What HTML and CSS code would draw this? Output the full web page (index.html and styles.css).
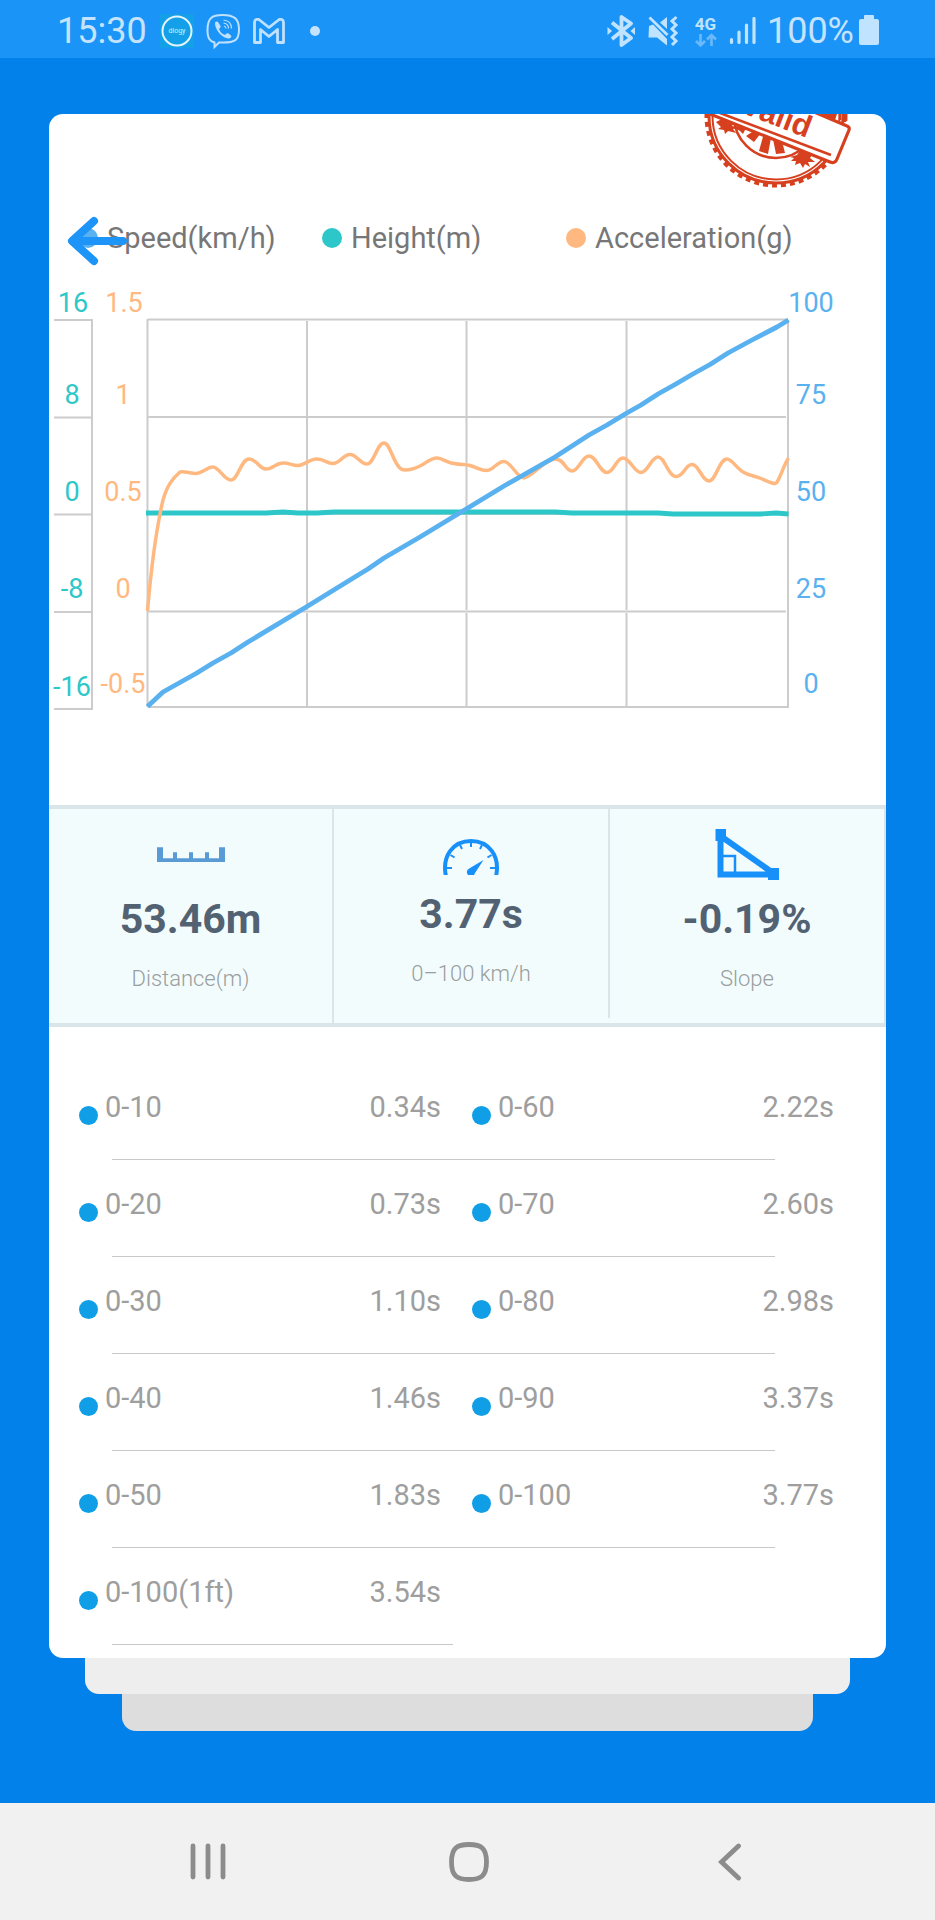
FILE: index.html
```html
<!DOCTYPE html>
<html lang="en">
<head>
<meta charset="utf-8">
<meta name="viewport" content="width=device-width, initial-scale=1">
<title>Acceleration report</title>
<link rel="stylesheet" href="styles.css">
</head>
<body>
<header class="status">
  <span class="status-text status-time">15:30</span>
  <svg class="status-app" width="34" height="34" viewBox="160 13 34 34" aria-hidden="true">
    <rect x="160" y="13" width="34" height="34" fill="#14a0e8"/>
    <circle cx="177" cy="30" r="14.500" fill="none" stroke="#e4f4fd" stroke-width="2"/>
    <text x="177" y="32" font-size="7" text-anchor="middle" fill="#d5effc">diogy</text>
  </svg>
  <svg class="status-viber" width="34" height="36" viewBox="206 12 34 36" fill="none" stroke="#c0e1fd" stroke-width="2" aria-hidden="true">
    <path d="M222.500 14C212 14 207.500 17 207.500 29c0 8 2 11 7 12.500v4.500l4.500-4.500h4c11.500 0 16-2 16-13S234 14 222.500 14z"/>
    <path d="M215 21.500c1-1 2-1.500 3-.5l2.500 4c.5 1-.5 2-1.500 3 1 3 3 5 6 6 1-1 2-2 3.500-1.500l2.500 2c1 1-.5 3-2.500 3-6 0-14-9-13.500-16z" fill="#c0e1fd" stroke="none"/>
    <path d="M223.500 19c5 .5 8 3.500 8 8.500M223.500 22c3 .5 5 2.500 5 5.500M224 25c1.200.2 1.800 1 2 2.500" stroke-width="1.200"/>
  </svg>
  <svg class="status-mail" width="34" height="26" viewBox="252 16.500 34 26" fill="none" stroke="#c0e1fd" stroke-width="2.800" stroke-linejoin="round" aria-hidden="true">
    <path d="M254.500 41v-20c0-3 3-4 5-2.500l9.500 7.500 9.500-7.500c2-1.500 5-.5 5 2.500v20h-6v-13l-8.500 7-8.500-7v13z"/>
  </svg>
  <span class="status-more"></span>
  <svg class="status-bt" width="28" height="32" viewBox="605 14 28 32" aria-hidden="true">
    <path d="M610 21.500l19 15.500-9.500 7v-28l9.500 6.500-19 15.500" fill="none" stroke="#c0e3ff" stroke-width="3.800" stroke-linejoin="round"/>
    <path d="M605.500 26l4.500 4-4.500 4zM633 26l-4.500 4 4.500 4z" fill="#c0e3ff"/>
  </svg>
  <svg class="status-mute" width="32" height="32" viewBox="646 13 32 32" aria-hidden="true">
    <path d="M647 24l4-1.500 14 14.500v6.500l-10-8h-8.500zM658 20.500l7-5.500v12z" fill="#c0e3ff"/>
    <path d="M647.500 15.500l18 17.500" stroke="#c0e3ff" stroke-width="2.800"/>
    <path d="M674.500 15l-4.500 4 4 4-4 4 4 4-4 4 4 4-4 4" fill="none" stroke="#c0e3ff" stroke-width="3"/>
  </svg>
  <svg class="status-net" width="24" height="34" viewBox="692 13 24 34" aria-hidden="true">
    <text x="703.500" y="29" font-size="17" font-weight="700" text-anchor="middle" fill="#c0e3ff">4G</text>
    <path d="M698.500 33v11M694 40l4.500 4.500 4.500-4.500M709.500 45v-11M705 38.500l4.500-4.500 4.500 4.500" fill="none" stroke="#6bb9fb" stroke-width="2.600"/>
  </svg>
  <svg class="status-signal" width="27" height="28" viewBox="727 17 27 28" fill="none" stroke="#c0e3ff" stroke-width="3.200" stroke-linecap="round" aria-hidden="true">
    <path d="M729.500 39.500v3M737 32v10.500M744.500 25v17.500M752 18.500v24"/>
  </svg>
  <span class="status-text status-percent">100%</span>
  <svg class="status-battery" width="20" height="31" viewBox="0 0 20 31" aria-hidden="true">
    <path d="M6 0h8q1 0 1 1v3h3q2 0 2 2v22q0 2-2 2H2q-2 0-2-2V6q0-2 2-2h3V1q0-1 1-1z" fill="#c0e3ff"/>
  </svg>
</header>

<main class="page">
  <article class="card">
    <svg class="stamp" width="152" height="76" viewBox="700 114 152 76" role="img" aria-label="Valid stamp" fill="none" stroke="#d7401f">
      <circle cx="776" cy="116" r="69.500" stroke-width="4" stroke-dasharray="5 4"/>
      <circle cx="776" cy="116" r="67" stroke-width="3"/>
      <circle cx="776" cy="116" r="63.500" stroke-width="2"/>
      <circle cx="776" cy="116" r="42" stroke-width="2.600"/>
      <g fill="#d7401f" stroke="none">
        <path d="M755 130l6 3-7 9-8-6zM764 133l7 5-3 16-9-3zM773 139l9 2 3 12-9 1z"/>
        <path d="M716 122l8-4 3 4 7 1-2 3 8 2-7 1 3 4-8-2-3 3-1-4-6-1 3-2zM790 157l7-2 3-4 7 3 5 1-2 3 5 4-7 0 2 5-5-3-2 4-3-5-5 2 1-4-5 0 3-3z"/>
        <path d="M733 127l12-2 6 4-6 1-2 4-3-3z"/>
      </g>
      <path d="M700 110L830 162q5 2 7-3l12-29q1-3-2-4L800 106z" fill="#fff" stroke-width="3.200"/>
      <path d="M712 110L831 155M840 120v-8M845 122v-10" stroke-width="2.600"/>
      <path d="M820 114l15 6 2-6z" fill="#d7401f" stroke="none"/>
      <text x="807" y="138" transform="rotate(21 807 138)" text-anchor="end" font-family="Liberation Sans, sans-serif" font-size="31" font-weight="700" fill="#d7401f" stroke="none">Valid</text>
    </svg>

    <section class="legend-row">
      <ul class="legend">
        <li class="legend-item"><span class="legend-dot legend-dot-speed"></span>Speed(km/h)</li>
        <li class="legend-item"><span class="legend-dot legend-dot-height"></span>Height(m)</li>
        <li class="legend-item"><span class="legend-dot legend-dot-accel"></span>Acceleration(g)</li>
      </ul>
      <button class="back" type="button" aria-label="Back">
        <svg width="62" height="52" viewBox="67 215 62 52" fill="none" stroke="#1c94f8" stroke-width="8" stroke-linecap="round" stroke-linejoin="round">
          <path d="M73 241h50M94 221L72 241l22 20"/>
        </svg>
      </button>
    </section>

    <svg class="chart" viewBox="49 280 837 440" role="img" aria-label="Speed, height and acceleration">
      <g fill="none" stroke="#cccccc" stroke-width="2">
        <path d="M54 320H92V709H54M54 417.500H92M54 514.500H92M54 612H92"/>
        <path d="M148 319.500H788M148 417H786M148 514H786M148 611.500H786M148 707H789"/>
        <path d="M147.500 319V707M788 320V707M307 321V416M307 418V610M307 613V707M466.500 321V416M466.500 418V610M466.500 613V707M626.500 321V416M626.500 418V610M626.500 613V707"/>
      </g>
      <g fill="none" stroke-linejoin="round">
        <path stroke="#2ec7c9" stroke-width="4.800" d="M146 513H266L283 512L298 513H317L334 512H555L572 513H658L673 514H760L776 513L788.500 514"/>
        <path stroke="#ffb980" stroke-width="3.500" d="M147.500 611C151 570 156 530 163 500C167 486 172 479 180 472C185 471 190 473.500 196 473.500S207 467 213 467S224 480 231 480S241 459 249 459S259 469 266 469S276 463 283 463S292 465.500 298 465.500S309 459 317 459S326 463.500 333 463.500S343 454.500 350 454.500S360 464 367 464S377 443 384 443S394 470 405 470Q412 470 420 466C426 463 431 458 437 458C442 458 447 463 454 463.500C462 465 464 464 470 465.500C478 468 481 470.500 487 470.500S497 461.500 504 461.500S517 478 524 478S545 459 555 459S565 471 572 471S582 456 589 456S600 472.500 607 472.500S616 458 623 458S634 472.500 641 472.500S651 457 658 457S668 476.500 676 476.500S685 464.500 692 464.500S702 481 709 481S719 459 727 459C732 459 737 469 744 472.500C750 476 755 476 761 478.500S772 483.500 775 483.500C779 483 783 466 788.500 458"/>
        <path stroke="#5ab1ef" stroke-width="4.800" d="M147.500 706.500L163 692L196 673.500L213 663L231 653L248 642L307 606.500L350 580L368 569L384 558L420 537L467 508.500L504 486L555 457L589 435L607 425L626 413.500L641 405L658 394L675 384.500L692 374.500L710 364.500L728 353L752 340L777 327L788.500 320"/>
      </g>
      <g class="axis axis-height">
        <text x="73" y="312">16</text><text x="72" y="404">8</text><text x="72" y="501">0</text><text x="72" y="598">-8</text><text x="72" y="696">-16</text>
      </g>
      <g class="axis axis-accel">
        <text x="124" y="312">1.5</text><text x="123" y="404">1</text><text x="123" y="501">0.5</text><text x="123" y="598">0</text><text x="123" y="693">-0.5</text>
      </g>
      <g class="axis axis-speed">
        <text x="811" y="312">100</text><text x="811" y="404">75</text><text x="811" y="501">50</text><text x="811" y="598">25</text><text x="811" y="693">0</text>
      </g>
    </svg>

    <section class="stats">
      <div class="stat">
        <svg width="68" height="51" viewBox="156 829 68 51" fill="#5b9bd5" aria-hidden="true">
          <path d="M156 847.300h6v11h10v-6h4v6h12v-6h4v6h12v-6h4v6h10v-11h6v14.700h-68z"/>
        </svg>
        <strong class="stat-value">53.46m</strong>
        <span class="stat-label">Distance(m)</span>
      </div>
      <div class="stat stat-time">
        <svg width="58" height="46" viewBox="441 829 58 46" fill="none" stroke="#1890fa" aria-hidden="true">
          <path d="M444.800 875.500C441 856 452 841 470 841S499 856 495.200 875.500" stroke-width="4"/>
          <path d="M470 842v5M459 845l2 4M481 845l-2 4M449.500 855l4 2.500M490.500 855l-4 2.500M446 868h5M494 868h-5" stroke-width="2"/>
          <path d="M482.500 860l-8.500 13q-1 3-4 3t-4-3 3-5z" fill="#1890fa" stroke="none"/>
        </svg>
        <strong class="stat-value">3.77s</strong>
        <span class="stat-label">0–100 km/h</span>
      </div>
      <div class="stat">
        <svg width="64" height="51" viewBox="715 829 64 51" aria-hidden="true">
          <path d="M720.500 836V874.500H774M722 837L773 873" fill="none" stroke="#1890fa" stroke-width="6"/>
          <path d="M722 856h13v17" fill="none" stroke="#1890fa" stroke-width="2.500"/>
          <path d="M715.500 829h10.500v12h-10.500zM768 868h11v12h-11z" fill="#1890fa"/>
        </svg>
        <strong class="stat-value">-0.19%</strong>
        <span class="stat-label">Slope</span>
      </div>
    </section>

    <section class="splits">
      <div class="split-row">
        <div class="split"><span class="split-dot"></span><span class="split-name">0-10</span><span>0.34s</span></div>
        <div class="split"><span class="split-dot"></span><span class="split-name">0-60</span><span>2.22s</span></div>
      </div>
      <div class="split-row">
        <div class="split"><span class="split-dot"></span><span class="split-name">0-20</span><span>0.73s</span></div>
        <div class="split"><span class="split-dot"></span><span class="split-name">0-70</span><span>2.60s</span></div>
      </div>
      <div class="split-row">
        <div class="split"><span class="split-dot"></span><span class="split-name">0-30</span><span>1.10s</span></div>
        <div class="split"><span class="split-dot"></span><span class="split-name">0-80</span><span>2.98s</span></div>
      </div>
      <div class="split-row">
        <div class="split"><span class="split-dot"></span><span class="split-name">0-40</span><span>1.46s</span></div>
        <div class="split"><span class="split-dot"></span><span class="split-name">0-90</span><span>3.37s</span></div>
      </div>
      <div class="split-row">
        <div class="split"><span class="split-dot"></span><span class="split-name">0-50</span><span>1.83s</span></div>
        <div class="split"><span class="split-dot"></span><span class="split-name">0-100</span><span>3.77s</span></div>
      </div>
      <div class="split-row split-row-half">
        <div class="split"><span class="split-dot"></span><span class="split-name">0-100(1ft)</span><span>3.54s</span></div>
      </div>
    </section>
  </article>
  <div class="sheet sheet-near"></div>
  <div class="sheet sheet-far"></div>
</main>

<nav class="navbar" aria-label="System">
  <button class="nav-button" type="button" aria-label="Recent apps">
    <svg width="36" height="38" viewBox="0 0 36 38" fill="none" stroke="#8c8c8c" stroke-width="4.800" stroke-linecap="round"><path d="M3 3v31M18 3v31M33 3v31"/></svg>
  </button>
  <button class="nav-button" type="button" aria-label="Home">
    <svg width="40" height="40" viewBox="0 0 40 40" fill="none" stroke="#8c8c8c" stroke-width="4.800"><path d="M20 2.500C32 2.500 37.500 6 37.500 20S32 37.500 20 37.500 2.500 34 2.500 20 8 2.500 20 2.500z"/></svg>
  </button>
  <button class="nav-button" type="button" aria-label="Back">
    <svg width="24" height="38" viewBox="0 0 24 38" fill="none" stroke="#8c8c8c" stroke-width="4.800" stroke-linecap="round"><path d="M20.500 3L3.500 19l17 16"/></svg>
  </button>
</nav>
</body>
</html>
```

FILE: styles.css
```css
* {
  box-sizing: border-box;
}

body {
  margin: 0;
  min-height: 100vh;
  display: flex;
  flex-direction: column;
  background: #0281eb;
  font-family: Roboto, "Noto Sans", sans-serif;
}

svg {
  display: block;
  flex: none;
}

button {
  margin: 0;
  padding: 0;
  border: 0;
  background: none;
  cursor: pointer;
}

/* Status bar */
.status {
  height: 58px;
  padding: 3px 56px 0 57px;
  display: flex;
  align-items: center;
  background: #1b94f8;
}

.status-text {
  font-size: 36px;
  line-height: 42px;
  color: #c5e3fd;
}

.status-app {
  margin-left: 13px;
}

.status-viber {
  margin-left: 12px;
}

.status-mail {
  margin-left: 12px;
}

.status-more {
  width: 10px;
  height: 10px;
  margin: 0 auto 0 24px;
  border-radius: 50%;
  background: #c5e3fd;
}

.status-mute {
  margin-left: 13px;
}

.status-net {
  margin-left: 14px;
}

.status-signal {
  margin-left: 11px;
}

.status-percent {
  margin-left: 11px;
}

.status-battery {
  margin-left: 5px;
}

/* Card */
.page {
  flex: 1;
  padding: 56px 49px;
}

.card {
  position: relative;
  overflow: hidden;
  border-radius: 14px;
  background: #fff;
}

.stamp {
  position: absolute;
  top: 0;
  right: 34px;
}

.legend-row {
  position: relative;
  padding: 106px 76px 24px 29px;
}

.legend {
  margin: 0;
  padding: 0;
  list-style: none;
  display: grid;
  grid-template-columns: repeat(3, 1fr);
}

.legend-item {
  display: flex;
  align-items: center;
  gap: 9px;
  font-size: 29px;
  line-height: 36px;
  color: #777;
  white-space: nowrap;
}

.legend-dot {
  flex: none;
  width: 20px;
  height: 20px;
  border-radius: 50%;
}

.legend-dot-speed {
  background: #5ab1ef;
}

.legend-dot-height {
  background: #2ec7c9;
}

.legend-dot-accel {
  background: #ffb980;
}

.back {
  position: absolute;
  left: 18px;
  bottom: 13px;
}

.chart {
  width: 100%;
  margin-bottom: 85px;
}

.axis {
  font-size: 27px;
  text-anchor: middle;
}

.axis-height {
  fill: #2ec7c9;
}

.axis-accel {
  fill: #ffb980;
}

.axis-speed {
  fill: #5ab1ef;
}

/* Summary figures */
.stats {
  display: grid;
  grid-template-columns: 285fr 276fr 276fr;
  border-top: 4px solid #d9e5e8;
  border-bottom: 4px solid #d9e5e8;
  background: #f2fcfd;
}

.stat {
  padding: 20px 0 31px;
  display: flex;
  flex-direction: column;
  align-items: center;
  border-right: 2px solid #d9e5e8;
}

.stat-time {
  margin-bottom: 5px;
}

.stat-value {
  margin-top: 15px;
  font-size: 41px;
  line-height: 48px;
  font-weight: 700;
  color: #526273;
}

.stat-label {
  margin-top: 23px;
  font-size: 22px;
  line-height: 26px;
  font-weight: 300;
  color: #999e9e;
}

/* Split times */
.splits {
  padding: 36px 21px 13px 30px;
  font-size: 29px;
  line-height: 36px;
  color: #9e9e9e;
}

.split-row {
  height: 97px;
  padding-top: 26px;
  display: grid;
  grid-template-columns: 1fr 1fr;
  align-content: space-between;
}

.split-row::after {
  content: "";
  grid-column: 1 / -1;
  height: 1px;
  margin: 0 90px 0 33px;
  background: #c8c8c8;
}

.split-row-half::after {
  grid-column: 1;
  margin-right: 19px;
}

.split {
  padding-right: 31px;
  display: flex;
  align-items: flex-end;
}

.split-dot {
  width: 19px;
  height: 19px;
  margin-right: 7px;
  border-radius: 50%;
  background: #109fe6;
}

.split-name {
  flex: 1;
}

/* Sheets stacked behind the card */
.sheet {
  border-radius: 0 0 14px 14px;
}

.sheet-near {
  height: 36px;
  margin: 0 36px;
  background: #eee;
}

.sheet-far {
  height: 37px;
  margin: 0 73px;
  background: #ddd;
}

/* System navigation */
.navbar {
  height: 117px;
  padding: 0 75px 0 77px;
  display: grid;
  grid-template-columns: repeat(3, 1fr);
  background: #f1f1f1;
}

.nav-button {
  display: flex;
  align-items: center;
  justify-content: center;
}
```
